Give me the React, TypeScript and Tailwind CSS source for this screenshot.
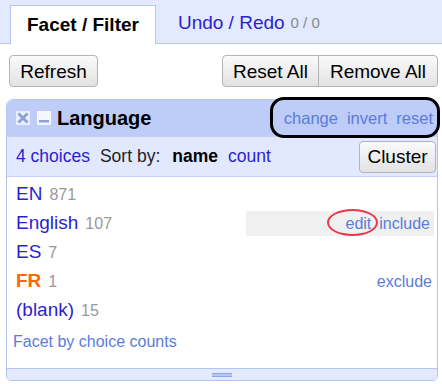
import React from 'react'

const font = { fontFamily: '"Liberation Sans", Arial, sans-serif' }

function Btn({ label, className = '' }: { label: string; className?: string }) {
  return (
    <button
      className={`h-[32px] border border-[#b4b4b4] bg-gradient-to-b from-[#fafafa] to-[#e2e2e2] text-[19px] text-black leading-none ${className}`}
    >
      {label}
    </button>
  )
}

function CloseIcon() {
  return (
    <svg width="14" height="14" viewBox="0 0 14 14">
      <rect x="0" y="0" width="14" height="14" fill="#e8eefe" />
      <path d="M2.5 2.5 L11.5 11.5 M11.5 2.5 L2.5 11.5" stroke="#8d9fd6" strokeWidth="2.8" />
    </svg>
  )
}

function MinIcon() {
  return (
    <svg width="14" height="14" viewBox="0 0 14 14">
      <rect x="0" y="0" width="14" height="14" fill="#f4f7ff" />
      <rect x="2" y="9" width="10" height="2.5" fill="#8d9fd6" />
    </svg>
  )
}

const choices = [
  { name: 'EN', count: 871 },
  { name: 'English', count: 107, hover: true },
  { name: 'ES', count: 7 },
  { name: 'FR', count: 1, selected: true },
  { name: '(blank)', count: 15 },
]

export default function App() {
  return (
    <div className="relative w-[442px] h-[384px] bg-white overflow-hidden" style={font}>
      {/* tabs */}
      <div className="h-[44px] bg-[#e3e9fe] border-b border-[#b5c6f1] flex items-end pl-[10px]">
        <div className="h-[39px] -mb-px bg-white border border-b-0 border-[#b5c6f1] px-[16px] flex items-center text-[19px] font-bold text-black">
          Facet / Filter
        </div>
        <div className="h-[40px] flex items-center pl-[22px] text-[19px] text-[#2c1fcf]">
          Undo / Redo<span className="ml-[6px] text-[15px] text-[#8a8a8a]">0 / 0</span>
        </div>
      </div>

      {/* buttons */}
      <div className="flex justify-between pl-[9px] pr-[4px] pt-[11px]">
        <Btn label="Refresh" className="w-[89px] rounded-[4px]" />
        <div className="flex">
          <Btn label="Reset All" className="w-[97px] rounded-l-[4px]" />
          <Btn label="Remove All" className="w-[120px] -ml-px rounded-r-[4px]" />
        </div>
      </div>

      {/* facet panel */}
      <div className="ml-[6px] mt-[12px] w-[432px] h-[282px] border border-[#b3c5f3] rounded-t-[7px] rounded-b-[5px] overflow-hidden flex flex-col">
        <div className="h-[36px] bg-[#bdcdf7] flex items-center pl-[9px] pr-[4px] shrink-0">
          <div className="flex items-center gap-[7px]">
            <CloseIcon />
            <MinIcon />
          </div>
          <span className="ml-[6px] text-[20px] font-bold text-black">Language</span>
          <div className="ml-auto flex gap-[9px] text-[16.5px] text-[#5b7cdb]">
            <span>change</span>
            <span>invert</span>
            <span>reset</span>
          </div>
        </div>
        <div className="h-[41px] bg-[#e2e9fe] border-t border-b border-[#c3d1f6] flex items-center pl-[9px] pr-[1px] shrink-0 text-[17.5px]">
          <span className="text-[#2c1fcf]">4 choices</span>
          <span className="ml-[10px] text-[#222]">Sort by:</span>
          <span className="ml-[12px] font-bold text-black">name</span>
          <span className="ml-[10px] text-[#2c1fcf]">count</span>
          <Btn label="Cluster" className="ml-auto w-[77px] h-[30px] rounded-[4px] text-[18px]" />
        </div>
        <div className="flex-1 bg-white pl-[9px] pr-[3px] pt-[3px]">
          {choices.map((c) => (
            <div key={c.name} className="h-[29px] flex items-center justify-between">
              <div className="flex items-baseline">
                <span
                  className={`text-[19px] ${c.selected ? 'text-[#ff6a00] font-bold' : 'text-[#2c1fcf]'}`}
                >
                  {c.name}
                </span>
                <span className="ml-[7px] text-[16px] text-[#999]">{c.count}</span>
              </div>
              {c.hover && (
                <div className="w-[188px] h-[25px] bg-[#f0f0f0] flex items-center justify-end gap-[8px] pr-[4px] text-[16px] text-[#5b7cdb]">
                  <span>edit</span>
                  <span>include</span>
                </div>
              )}
              {c.selected && <span className="pr-[2px] text-[16px] text-[#5b7cdb]">exclude</span>}
            </div>
          ))}
          <div className="mt-[7px] text-[16px] leading-[20px] text-[#5b7cdb] -ml-[3px]">Facet by choice counts</div>
        </div>
        <div className="h-[12px] bg-[#e3e9fe] border-t border-[#b3c5f3] flex items-center justify-center shrink-0">
          <div className="w-[20px] h-[4px] border-t border-b border-[#8ea8e6] bg-[#b7c9f3]" />
        </div>
      </div>

      {/* annotations */}
      <div className="absolute left-[270px] top-[97px] w-[170px] h-[41px] border-[3px] border-black rounded-[14px]" />
      <div className="absolute left-[327px] top-[209px] w-[51px] h-[27px] border-2 border-[#e8374a] rounded-[50%]" />
    </div>
  )
}
